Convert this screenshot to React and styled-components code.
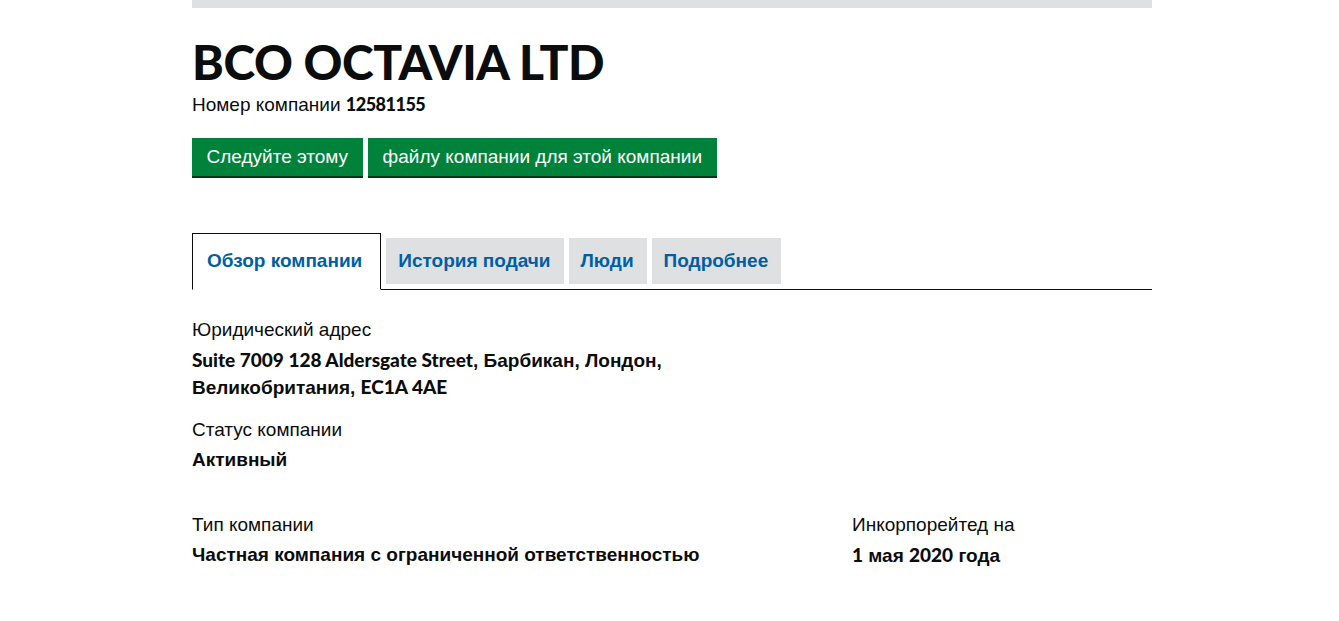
import React from "react";
import styled, { createGlobalStyle } from "styled-components";

const GlobalStyle = createGlobalStyle`
  body {
    margin: 0;
    background: #fff;
    color: #0b0c0c;
    font-family: "Liberation Sans", Arial, sans-serif;
  }
`;

const Page = styled.div`
  width: 960px;
  margin-left: 192px;
`;

const TopBar = styled.div`
  height: 8px;
  background: #dee0e2;
`;

const Latin = styled.span`
  font-family: Lato, "Liberation Sans", sans-serif;
`;

const Title = styled.h1`
  margin: 28px 0 0;
  font-family: Lato, "Liberation Sans", sans-serif;
  font-weight: 900;
  font-size: 48px;
  line-height: 52px;
  letter-spacing: -0.4px;
`;

const CompanyNumber = styled.p`
  margin: 4px 0 0;
  font-size: 19px;
  line-height: 25px;
  strong {
    font-family: Lato, "Liberation Sans", sans-serif;
    font-weight: 900;
    font-size: 18px;
    letter-spacing: -0.5px;
  }
`;

const Actions = styled.div`
  display: flex;
  gap: 5px;
  margin-top: 21px;
`;

const GreenButton = styled.a`
  display: inline-block;
  background: #00823b;
  color: #fff;
  font-size: 19px;
  line-height: 22px;
  padding: 8px 15px 8px 14.5px;
  box-shadow: 0 2px 0 #003618;
  text-decoration: none;
`;

const Tabs = styled.ul`
  display: flex;
  align-items: flex-start;
  gap: 5px;
  list-style: none;
  margin: 57px 0 0;
  padding: 0;
  border-bottom: 1px solid #0b0c0c;
`;

const Tab = styled.li`
  margin-bottom: ${(p) => (p.$active ? "-1px" : "5px")};
  margin-top: ${(p) => (p.$active ? "0" : "5px")};
  background: ${(p) => (p.$active ? "#fff" : "#dee0e2")};
  border: ${(p) => (p.$active ? "1px solid #0b0c0c" : "none")};
  border-bottom: ${(p) => (p.$active ? "1px solid #fff" : "none")};
  padding: ${(p) => (p.$active ? "16px 18px 17px 14px" : "12px 13px 12px 12px")};
  a {
    color: #005ea5;
    font-weight: 700;
    font-size: 19px;
    line-height: 22px;
    text-decoration: none;
  }
`;

const Field = styled.div`
  margin-top: ${(p) => p.$top || "0"};
`;

const Label = styled.div`
  font-size: 19px;
  line-height: 25px;
`;

const Value = styled.div`
  margin-top: 5px;
  font-size: 19px;
  line-height: 26px;
  font-weight: 700;
  max-width: ${(p) => p.$max || "none"};
  ${Latin} {
    font-weight: 900;
  }
`;

const Grid = styled.div`
  display: grid;
  grid-template-columns: 660px 1fr;
  margin-top: 39px;
`;

export default function App() {
  return (
    <>
      <GlobalStyle />
      <Page>
        <TopBar />
        <Title>BCO OCTAVIA LTD</Title>
        <CompanyNumber>
          Номер компании <strong>12581155</strong>
        </CompanyNumber>
        <Actions>
          <GreenButton>Следуйте этому</GreenButton>
          <GreenButton>файлу компании для этой компании</GreenButton>
        </Actions>
        <Tabs>
          <Tab $active>
            <a>Обзор компании</a>
          </Tab>
          <Tab>
            <a>История подачи</a>
          </Tab>
          <Tab>
            <a>Люди</a>
          </Tab>
          <Tab>
            <a>Подробнее</a>
          </Tab>
        </Tabs>
        <Field $top="27px">
          <Label>Юридический адрес</Label>
          <Value $max="490px">
            <Latin>Suite 7009 128 Aldersgate Street</Latin>, Барбикан, Лондон,
            Великобритания, <Latin>EC1A 4AE</Latin>
          </Value>
        </Field>
        <Field $top="16px">
          <Label>Статус компании</Label>
          <Value>Активный</Value>
        </Field>
        <Grid>
          <Field>
            <Label>Тип компании</Label>
            <Value>Частная компания с ограниченной ответственностью</Value>
          </Field>
          <Field>
            <Label>Инкорпорейтед на</Label>
            <Value>
              <Latin>1</Latin> мая <Latin>2020</Latin> года
            </Value>
          </Field>
        </Grid>
      </Page>
    </>
  );
}
